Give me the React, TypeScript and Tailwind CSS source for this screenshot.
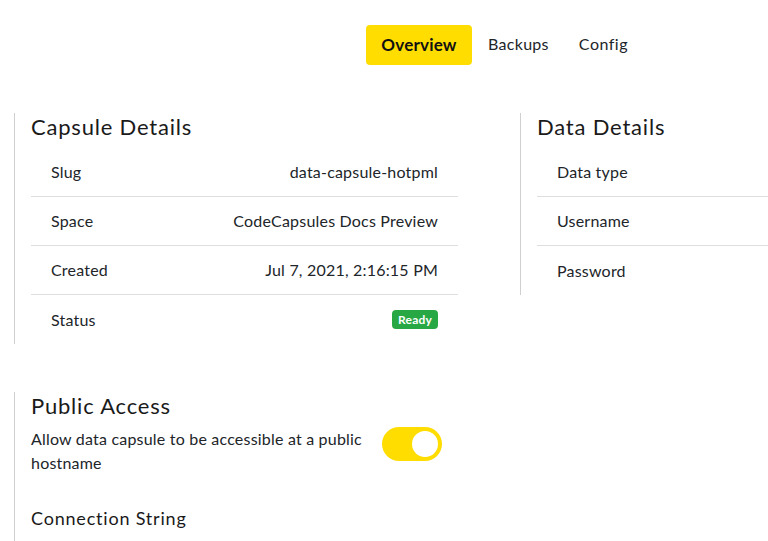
import React from 'react'

const capsuleRows = [
  { label: 'Slug', value: 'data-capsule-hotpml' },
  { label: 'Space', value: 'CodeCapsules Docs Preview' },
  { label: 'Created', value: 'Jul 7, 2021, 2:16:15 PM' },
]

const dataRows = ['Data type', 'Username', 'Password']

const App = () => {
  const [isPublic, setIsPublic] = React.useState(true)

  return (
    <div className="w-[768px] h-[541px] overflow-hidden bg-white text-[#212529] font-['Lato',sans-serif] tracking-[0.2px]">
      {/* tabs */}
      <div className="flex items-center pt-[25px] pl-[366px] text-[16px]">
        <button className="h-[40px] w-[106px] rounded-[4px] bg-[#ffdd00] font-bold text-[17px] text-[#111]">
          Overview
        </button>
        <button className="h-[40px] pb-[2px] ml-[16px] tracking-[0.3px]">Backups</button>
        <button className="h-[40px] pb-[2px] ml-[30px] tracking-[0.5px]">Config</button>
      </div>

      <div className="flex pl-[14px] pt-[48px] gap-[62px]">
        {/* capsule details */}
        <div className="w-[444px] shrink-0 border-l border-[#cfcfcf] pl-[16px]">
          <h2 className="text-[22px] leading-[27px] tracking-[0.8px] text-[#1a1a1a]">Capsule Details</h2>
          <div className="mt-[8px]">
            {capsuleRows.map((r) => (
              <div key={r.label} className="flex justify-between items-center h-[49px] px-[20px] border-b border-[#dedede]">
                <span>{r.label}</span>
                <span>{r.value}</span>
              </div>
            ))}
            <div className="flex justify-between items-center h-[49px] px-[20px]">
              <span>Status</span>
              <span className="rounded-[4px] bg-[#28a745] text-white text-[12px] font-bold px-[6px] leading-[19px]">Ready</span>
            </div>
          </div>
        </div>

        {/* data details */}
        <div className="w-[444px] shrink-0 border-l border-[#cfcfcf] pl-[16px] self-start">
          <h2 className="text-[22px] leading-[27px] tracking-[0.8px] text-[#1a1a1a]">Data Details</h2>
          <div className="mt-[8px]">
            {dataRows.map((d, i) => (
              <div key={d} className={`flex items-center h-[49px] px-[20px] ${i < 2 ? 'border-b border-[#dedede]' : ''}`}>
                <span>{d}</span>
              </div>
            ))}
          </div>
        </div>
      </div>

      {/* public access */}
      <div className="ml-[14px] mt-[48px] w-[444px] border-l border-[#cfcfcf] pl-[16px] h-[200px]">
        <h2 className="text-[22px] leading-[27px] tracking-[0.8px] text-[#1a1a1a]">Public Access</h2>
        <div className="flex justify-between items-start mt-[8px]">
          <p className="w-[345px] leading-[24px]">Allow data capsule to be accessible at a public hostname</p>
          <button
            onClick={() => setIsPublic(!isPublic)}
            className={`mr-[16px] w-[60px] h-[34px] rounded-full flex items-center px-[4px] ${isPublic ? 'bg-[#ffdd00] justify-end' : 'bg-[#ccc] justify-start'}`}
          >
            <span className="w-[26px] h-[26px] rounded-full bg-white" />
          </button>
        </div>
        <h3 className="mt-[30px] text-[18px] tracking-[0.8px] text-[#1a1a1a]">Connection String</h3>
      </div>
    </div>
  )
}

export default App
